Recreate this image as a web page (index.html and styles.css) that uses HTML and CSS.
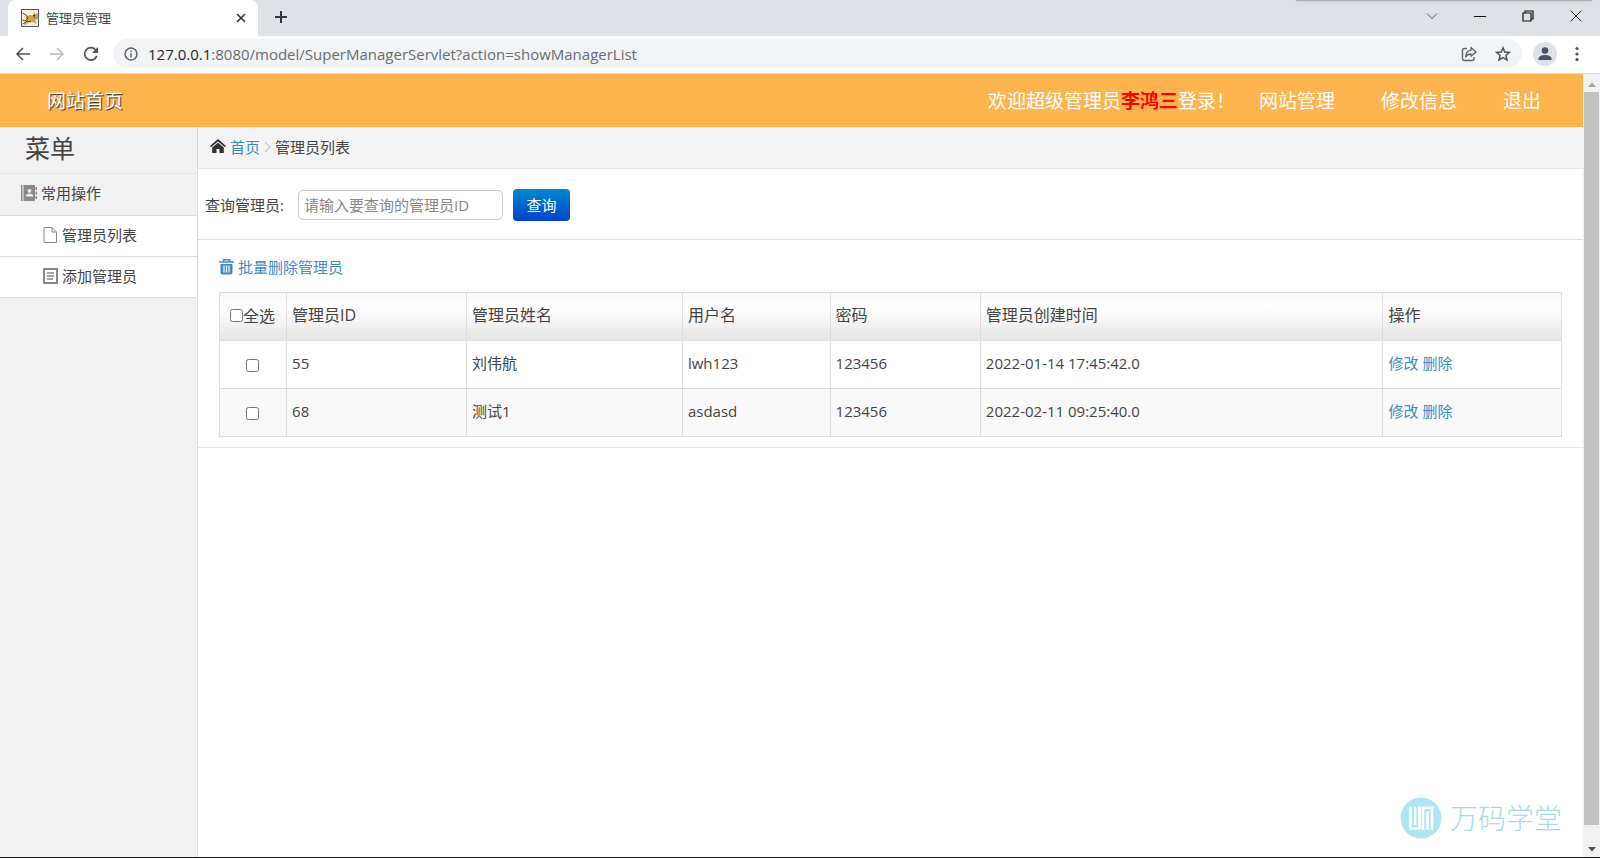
FILE: index.html
```html
<!DOCTYPE html>
<html lang="zh-CN">
<head>
<meta charset="utf-8">
<title>管理员管理</title>
<link rel="stylesheet" href="styles.css">
</head>
<body>
<div class="window">
  <div class="tabstrip">
    <div class="tab">
      <svg class="favicon" width="18" height="18" viewBox="0 0 18 18"><rect x=".5" y=".5" width="17" height="17" fill="#f4efe0" stroke="#4b5a68"/><path d="M5 8 8 6l4 .5L13 3l1.500 2L17 4v6l-3 1 2 4-4-2-3 0-5 3-2-1 3-3z" fill="#c9a24a"/><path d="M1.500 4 5 6 7 9 4 12 1.500 11M2 15l4-3 4 1M12 6l2 3" fill="none" stroke="#5a4c2c" stroke-width="1"/><circle cx="13.500" cy="6.500" r=".8" fill="#3d321a"/></svg>
      <span class="tab-title">管理员管理</span>
      <button class="icon-btn" aria-label="关闭标签页"><svg width="10" height="10" viewBox="0 0 10 10"><path d="M1 1l8 8M9 1 1 9" stroke="#333639" stroke-width="1.600"/></svg></button>
    </div>
    <button class="icon-btn new-tab" aria-label="新标签页"><svg width="14" height="14" viewBox="0 0 14 14"><path d="M7 1v12M1 7h12" stroke="#333639" stroke-width="2"/></svg></button>
    <div class="window-buttons">
      <button class="icon-btn" aria-label="标签搜索"><svg width="12" height="12" viewBox="0 0 12 12"><path d="M1 3.500 6 8.500 11 3.500" fill="none" stroke="#55585c"/></svg></button>
      <button class="icon-btn" aria-label="最小化"><svg width="12" height="12" viewBox="0 0 12 12"><path d="M0 6.500h12" stroke="#111"/></svg></button>
      <button class="icon-btn" aria-label="还原"><svg width="12" height="12" viewBox="0 0 12 12"><path d="M1 3h8v8H1zM3 3V1h8v8H9" fill="none" stroke="#111" stroke-width="1.200"/></svg></button>
      <button class="icon-btn" aria-label="关闭"><svg width="12" height="12" viewBox="0 0 12 12"><path d="M.5.5l11 11M11.500.5l-11 11" stroke="#222"/></svg></button>
    </div>
    <div class="edge-shadow"></div>
  </div>

  <div class="toolbar">
    <button class="icon-btn" aria-label="后退"><svg width="16" height="16" viewBox="0 0 16 16"><path d="M15 8H2M8 2 2 8l6 6" fill="none" stroke="#505356" stroke-width="1.600"/></svg></button>
    <button class="icon-btn" aria-label="前进"><svg width="16" height="16" viewBox="0 0 16 16"><path d="M1 8h13M8 2l6 6-6 6" fill="none" stroke="#b9bbbe" stroke-width="1.600"/></svg></button>
    <button class="icon-btn" aria-label="重新加载"><svg width="16" height="16" viewBox="0 0 16 16"><path d="M13.800 9.800A6.200 6.200 0 1 1 12.500 3.700L14 5.200" fill="none" stroke="#505356" stroke-width="1.700"/><path d="M15 1v6H9z" fill="#505356"/></svg></button>
    <div class="omnibox">
      <svg width="14" height="14" viewBox="0 0 14 14"><circle cx="7" cy="7" r="6" fill="none" stroke="#5f6368" stroke-width="1.500"/><path d="M7 6.200v4.300M7 3.500V5" stroke="#5f6368" stroke-width="1.500"/></svg>
      <span class="url"><span class="url-host">127.0.0.1</span>:8080/model/SuperManagerServlet?action=showManagerList</span>
      <button class="icon-btn" aria-label="分享"><svg width="16" height="16" viewBox="0 0 16 16"><path d="M6 2.500H3.500a2 2 0 0 0-2 2v8a2 2 0 0 0 2 2h7.500a2 2 0 0 0 2-2V11" fill="none" stroke="#5f6368" stroke-width="1.400"/><path d="M10 1.500 15 6l-5 4.300V8C7.500 8 5.800 9 4.700 11 4.900 7.500 6.600 4.500 10 4.200z" fill="none" stroke="#5f6368" stroke-width="1.300" stroke-linejoin="round"/></svg></button>
      <button class="icon-btn" aria-label="收藏"><svg width="16" height="16" viewBox="0 0 16 16"><path d="M8 1.800 9.800 6l4.600.4-3.500 3 1.100 4.500L8 11.500l-4 2.400 1.100-4.500-3.500-3L6.200 6z" fill="none" stroke="#505356" stroke-width="1.500"/></svg></button>
    </div>
    <button class="icon-btn" aria-label="用户"><svg width="24" height="24" viewBox="0 0 24 24"><circle cx="12" cy="12" r="12" fill="#dee1e6"/><circle cx="12" cy="8.500" r="3.300" fill="#4a5468"/><path d="M5.500 18v-1.500c0-2.200 3.500-3.500 6.500-3.500s6.500 1.300 6.500 3.500V18z" fill="#4a5468"/></svg></button>
    <button class="icon-btn" aria-label="菜单"><svg width="4" height="16" viewBox="0 0 4 16"><circle cx="2" cy="2.500" r="1.600" fill="#505356"/><circle cx="2" cy="8" r="1.600" fill="#505356"/><circle cx="2" cy="13.500" r="1.600" fill="#505356"/></svg></button>
  </div>

  <div class="viewport">
    <div class="page">
      <header class="banner">
        <a class="brand" href="#">网站首页</a>
        <nav class="banner-nav">
          <span class="welcome">欢迎超级管理员<b>李鸿三</b>登录！</span>
          <a href="#">网站管理</a>
          <a href="#">修改信息</a>
          <a href="#">退出</a>
        </nav>
      </header>
      <div class="body">
        <aside class="sidebar">
          <h2 class="menu-title">菜单</h2>
          <div class="menu-group"><svg width="16" height="16" viewBox="0 0 16 16"><path d="M0 0h1.500v16H0zM2.500 0H14v16H2.500zM14.500 2H16v3h-1.500zM14.500 6.500H16v3h-1.500zM14.500 11H16v3h-1.500z" fill="#8a8a8a"/><circle cx="8.500" cy="5.800" r="1.900" fill="#efefef"/><path d="M5 11.500V10l2-1.300h3L12 10v1.500z" fill="#efefef"/></svg><span>常用操作</span></div>
          <a class="menu-item" href="#"><svg width="15" height="16" viewBox="0 0 15 16"><path d="M1 .5h8L13.500 5v10.500H1zM9 .5V5h4.500" fill="#fff" stroke="#888"/></svg><span>管理员列表</span></a>
          <a class="menu-item" href="#"><svg width="15" height="16" viewBox="0 0 15 16"><path d="M1 1h13v14H1z" fill="#fff" stroke="#888" stroke-width="2"/><path d="M4 5h7M4 8h7M4 11h6" stroke="#888" stroke-width="1.300"/></svg><span>添加管理员</span></a>
        </aside>
        <main class="main">
          <div class="breadcrumb">
            <svg width="16" height="15" viewBox="0 0 16 15"><path d="M8 0 0 7l1 1.300L8 2.500l7 5.800L16 7z" fill="#333"/><path d="M8 3.800 2.200 8.600V14H6.500v-4h3v4h4.300V8.600z" fill="#333"/></svg>
            <a href="#">首页</a>
            <svg width="7" height="12" viewBox="0 0 7 12"><path d="M1 1l5 5-5 5" fill="none" stroke="#ccc" stroke-width="1.300"/></svg>
            <span>管理员列表</span>
          </div>
          <form class="search">
            <label for="query">查询管理员:</label>
            <input id="query" type="text" placeholder="请输入要查询的管理员ID">
            <button type="button" class="search-btn">查询</button>
          </form>
          <section class="list">
            <a class="batch" href="#"><svg width="15" height="16" viewBox="0 0 15 16"><path d="M0 3h15M4.500 3V.8h6V3" fill="none" stroke="#428bca" stroke-width="1.500"/><path d="M1.500 5h12v8.500q0 2-2 2h-8q-2 0-2-2z" fill="#428bca"/><path d="M5 6.500v7M7.500 6.500v7M10 6.500v7" stroke="#fff" stroke-width="1.200"/></svg><span>批量删除管理员</span></a>
            <table class="grid">
              <colgroup><col class="c-check"><col class="c-id"><col class="c-name"><col class="c-user"><col class="c-pass"><col class="c-time"><col class="c-ops"></colgroup>
              <thead><tr><th class="check"><label><input type="checkbox">全选</label></th><th>管理员ID</th><th>管理员姓名</th><th>用户名</th><th>密码</th><th>管理员创建时间</th><th>操作</th></tr></thead>
              <tbody>
                <tr><td class="check"><input type="checkbox" aria-label="选择 55"></td><td>55</td><td>刘伟航</td><td>lwh123</td><td>123456</td><td>2022-01-14 17:45:42.0</td><td><a href="#">修改</a> <a href="#">删除</a></td></tr>
                <tr><td class="check"><input type="checkbox" aria-label="选择 68"></td><td>68</td><td>测试1</td><td>asdasd</td><td>123456</td><td>2022-02-11 09:25:40.0</td><td><a href="#">修改</a> <a href="#">删除</a></td></tr>
              </tbody>
            </table>
          </section>
        </main>
      </div>
    </div>
    <div class="scrollbar">
      <svg width="16" height="16" viewBox="0 0 16 16"><path d="M4 11l4-4.500 4 4.500z" fill="#a3a3a3"/></svg>
      <div class="thumb"></div>
      <svg width="16" height="16" viewBox="0 0 16 16"><path d="M4 6l4 4.500L12 6z" fill="#505050"/></svg>
    </div>
    <div class="watermark">
      <svg width="42" height="42" viewBox="0 0 42 42"><circle cx="21" cy="21" r="20.500" fill="#aee5f4"/><path d="M10.500 9.500v22h9v-22M15 9.500v18.500M23 32.700V10.700h9v22M27.500 14.500v18.200" fill="none" stroke="#fff" stroke-width="2.600"/></svg>
      <span>万码学堂</span>
    </div>
  </div>
</div>
</body>
</html>
```
FILE: styles.css
```css
* { box-sizing: border-box; }
body {
  margin: 0;
  font: 400 15px/20px "Open Sans", "Noto Sans", "Noto Sans CJK SC", sans-serif;
  color: #444;
}
a { color: #428bca; text-decoration: none; }
svg { display: block; flex: none; }
button, input { font: inherit; }
.window { display: flex; flex-direction: column; height: 100vh; border-bottom: 1px solid #1a1a1a; }
.icon-btn { display: flex; padding: 0; border: 0; background: none; }

.tabstrip { position: relative; display: flex; align-items: flex-end; height: 36px; background: #dee1e6; }
.tab { display: flex; align-items: center; gap: 7px; width: 250px; height: 36px; margin-left: 8px; padding: 0 12px 0 13px; border-radius: 8px 8px 0 0; background: #fff; }
.tab-title { flex: 1; font-size: 13px; color: #45494d; }
.new-tab { margin: 0 0 12px 16px; }
.window-buttons { display: flex; gap: 36px; margin: 0 18px 14px auto; }
.edge-shadow { position: absolute; top: 0; right: 8px; width: 296px; height: 1px; background: #a9abaf; box-shadow: 0 0 3px #a9abaf; }

.toolbar { display: flex; align-items: center; gap: 18px; height: 38px; padding: 0 21px 2px 15px; border-bottom: 1px solid #d9dbde; background: #fff; }
.omnibox { display: flex; flex: 1; align-items: center; gap: 18px; height: 29px; margin: 0 -7px 0 -4px; padding: 0 11px; border-radius: 15px; background: #f1f3f4; }
.url { flex: 1; margin-left: -8px; color: #6a6d71; }
.url-host { color: #26282b; }

.viewport { position: relative; display: flex; flex: 1; min-height: 0; }
.page { display: flex; flex: 1; flex-direction: column; }
.scrollbar { display: flex; flex-direction: column; align-items: center; width: 17px; padding: 2px 0 0; background: #f1f1f1; }
.thumb { flex: 1; width: 15px; margin-bottom: 16px; background: #c1c1c1; }

.banner { display: flex; align-items: center; justify-content: space-between; height: 53px; padding: 0 42px 0 47px; background: #fdb44f; font-size: 19px; line-height: 28px; color: #fff; }
.banner a { color: #fff; }
.brand { text-shadow: 1px 1px 1px #333; }
.banner-nav { display: flex; gap: 46px; }
.welcome { margin-right: -22px; }
.welcome b { color: #f00; }

.body { display: flex; flex: 1; }
.sidebar { width: 198px; border-right: 1px solid #d8d8d8; background: #f1f1f1; }
.menu-title { height: 47px; margin: 0; padding: 0 25px; border-bottom: 1px solid #e4e4e4; font-size: 25px; font-weight: 400; line-height: 42px; }
.menu-group, .menu-item { display: flex; align-items: center; gap: 4px; padding-bottom: 3px; border-bottom: 1px solid #dcdcdc; color: #444; }
.menu-group { height: 42px; padding-left: 21px; }
.menu-item { height: 41px; padding-left: 43px; background: #fff; }

.main { flex: 1; background: #fff; }
.breadcrumb { display: flex; align-items: center; gap: 4px; height: 42px; padding: 0 12px 2px; border-bottom: 1px solid #e5e5e5; background: #f4f4f4; }
.search { display: flex; align-items: center; height: 71px; padding: 1px 0 0 7px; border-bottom: 1px solid #ddd; }
.search input { width: 205px; height: 30px; margin: 0 10px 0 14px; padding: 0 5px; border: 1px solid #ccc; border-radius: 5px; background: #fff; }
.search input::placeholder { color: #888; }
.search-btn { width: 57px; height: 32px; padding: 0; border: 0; border-radius: 4px; background: linear-gradient(#08c, #04c); color: #fff; }

.list { padding: 17px 21px 10px; border-bottom: 1px solid #e5e5e5; }
.batch { display: inline-flex; align-items: center; gap: 4px; margin-bottom: 15px; }
.grid { width: 100%; table-layout: fixed; border-collapse: collapse; }
.grid th, .grid td { height: 48px; padding: 0 5px 3px; border: 1px solid #ddd; text-align: left; }
.grid th { font-size: 16px; font-weight: 400; }
.grid thead tr { background: linear-gradient(#f8f8f8, #fff 30%, #e4e4e4); }
.grid tbody tr:nth-child(2) { background: #f9f9f9; }
.grid .check { padding: 0 1px 2px 0; text-align: center; }
.grid .check label { display: flex; align-items: center; justify-content: center; }
.grid input { width: 13px; height: 13px; margin: 0; vertical-align: middle; }
.c-check { width: 5%; }
.c-id { width: 13.400%; }
.c-name { width: 16.100%; }
.c-user { width: 11%; }
.c-pass { width: 11.200%; }
.c-time { width: 30%; }
.c-ops { width: 13.300%; }

.watermark { position: absolute; right: 38px; bottom: 18px; display: flex; align-items: center; gap: 8px; font-size: 28px; font-weight: 300; line-height: 42px; color: #a9d9e8; }
```
